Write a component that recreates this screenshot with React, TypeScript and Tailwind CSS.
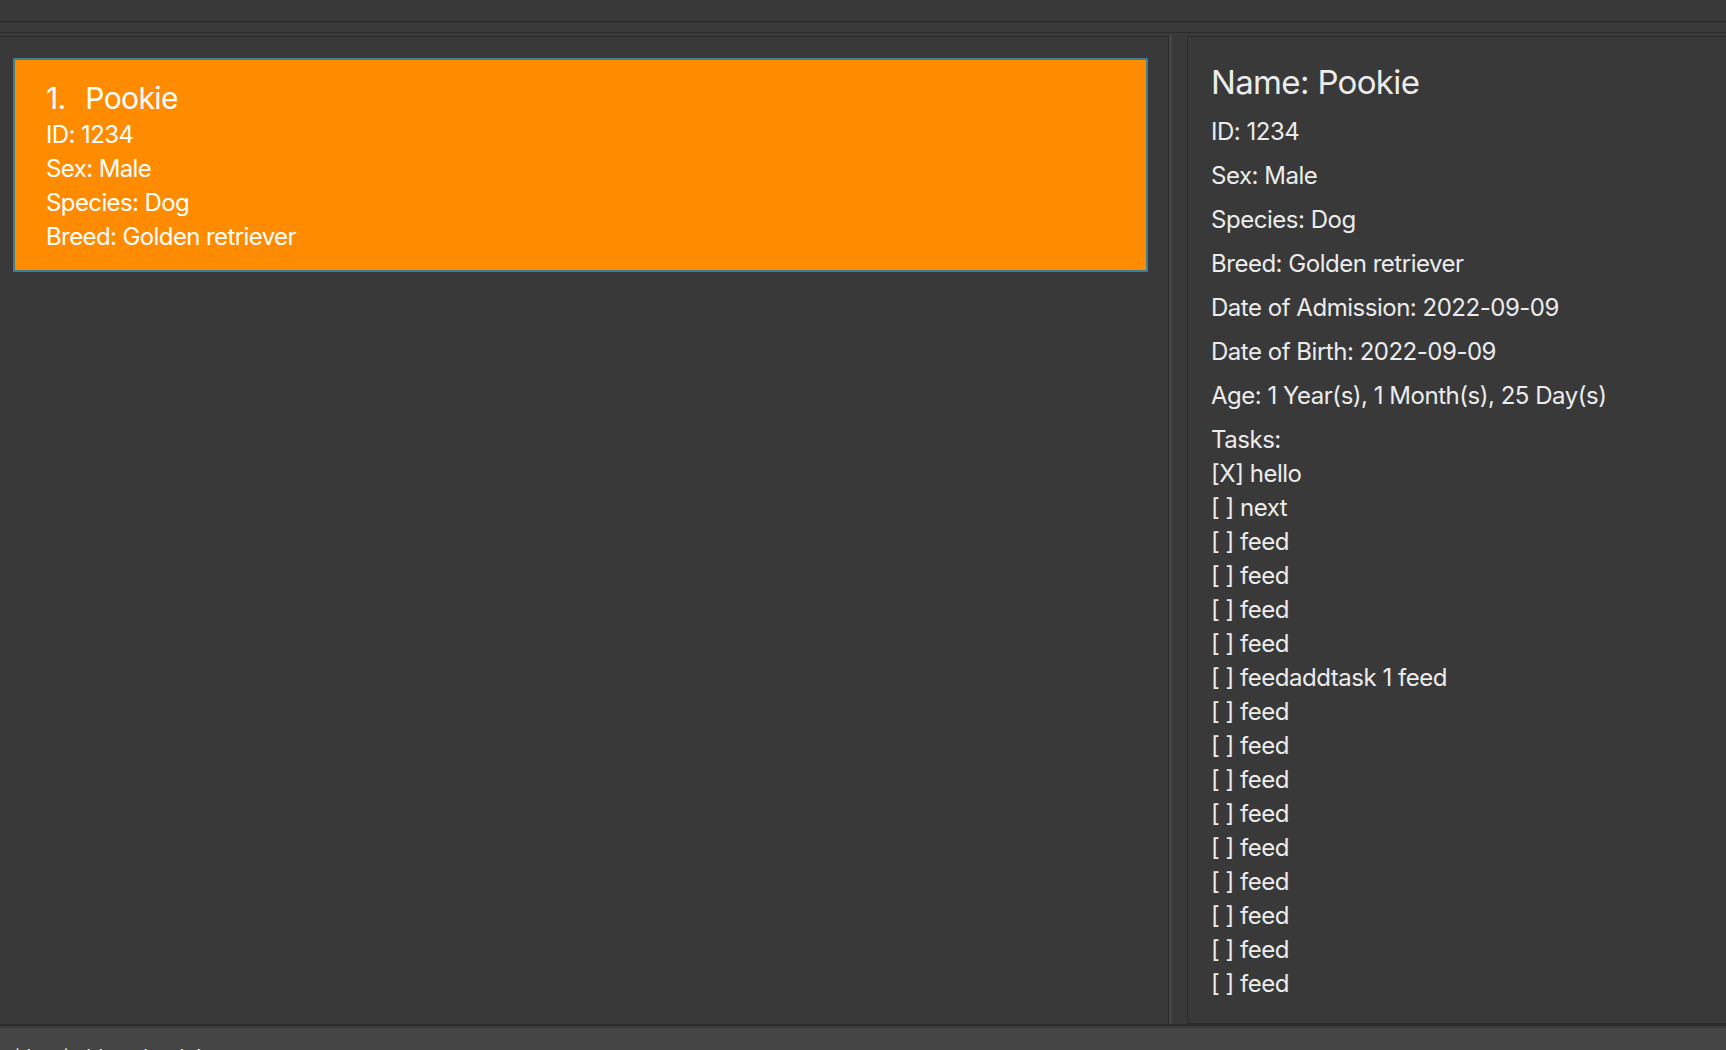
import React from 'react';

const PET = {
  index: 1,
  name: 'Pookie',
  id: '1234',
  sex: 'Male',
  species: 'Dog',
  breed: 'Golden retriever',
  admitted: '2022-09-09',
  born: '2022-09-09',
  age: '1 Year(s), 1 Month(s), 25 Day(s)',
};

const TASKS: { done: boolean; text: string }[] = [
  { done: true, text: 'hello' },
  { done: false, text: 'next' },
  { done: false, text: 'feed' },
  { done: false, text: 'feed' },
  { done: false, text: 'feed' },
  { done: false, text: 'feed' },
  { done: false, text: 'feedaddtask 1 feed' },
  ...Array.from({ length: 9 }, () => ({ done: false, text: 'feed' })),
];

const FONT = "font-['Inter','Noto_Sans',sans-serif]";

const PetCard: React.FC = () => (
  <div className="border-2 border-[#3f7f92] bg-[#ff8c00] pl-[31px] pt-[18px] pb-[16px] text-white">
    <div className="text-[30px] leading-[40px] tracking-[-0.02em]">
      {PET.index}.&nbsp; <span className="ml-[4px]">{PET.name}</span>
    </div>
    <div className="text-[24px] leading-[34px] tracking-[-0.025em]">
      <div>ID: {PET.id}</div>
      <div>Sex: {PET.sex}</div>
      <div>Species: {PET.species}</div>
      <div>Breed: {PET.breed}</div>
    </div>
  </div>
);

const Details: React.FC = () => (
  <div className="flex flex-col gap-[11px] pl-[23px] pt-[23px] text-[#ececec]">
    <div className="text-[33px] leading-[44px] tracking-[-0.02em]">Name: {PET.name}</div>
    <div className="flex flex-col gap-[10px] text-[24px] leading-[34px] tracking-[-0.02em]">
      <div>ID: {PET.id}</div>
      <div>Sex: {PET.sex}</div>
      <div>Species: {PET.species}</div>
      <div>Breed: {PET.breed}</div>
      <div>Date of Admission: {PET.admitted}</div>
      <div>Date of Birth: {PET.born}</div>
      <div>Age: {PET.age}</div>
      <div>
        <div>Tasks:</div>
        {TASKS.map((t, i) => (
          <div key={i}>
            [{t.done ? 'X' : ' '}] {t.text}
          </div>
        ))}
      </div>
    </div>
  </div>
);

export default function App() {
  return (
    <div className={`flex h-[1050px] w-full flex-col overflow-hidden bg-[#393939] ${FONT}`}>
      {/* top strips */}
      <div className="h-[21px] shrink-0 bg-[#393939]" />
      <div className="h-px shrink-0 bg-[#2a2a2a]" />
      <div className="h-[10px] shrink-0 bg-[#3a3a3a]" />
      <div className="h-px shrink-0 bg-[#2a2a2a]" />
      <div className="h-[3px] shrink-0 bg-[#3a3a3a]" />

      {/* main panes */}
      <div className="flex min-h-0 flex-1">
        <div className="w-[1169px] shrink-0 border-t border-r border-[#2a2a2a] pl-[13px] pr-[20px] pt-[21px]">
          <PetCard />
        </div>
        <div className="w-[3px] shrink-0 bg-[#464646]" />
        <div className="w-[15px] shrink-0 bg-[#393939]" />
        <div className="min-w-0 flex-1 overflow-hidden border-t border-l border-b border-[#2a2a2a]">
          <Details />
        </div>
      </div>

      {/* status bar */}
      <div className="h-[2px] shrink-0 bg-[#2a2a2a]" />
      <div className="h-[2px] shrink-0 bg-[#3b3b3b]" />
      <div className="h-[22px] shrink-0 overflow-hidden bg-[#454545] pl-[6px] pt-[16px] text-[20px] leading-[26px] text-[#f0f0f0]">
        ./data/addressbook.json
      </div>
    </div>
  );
}
